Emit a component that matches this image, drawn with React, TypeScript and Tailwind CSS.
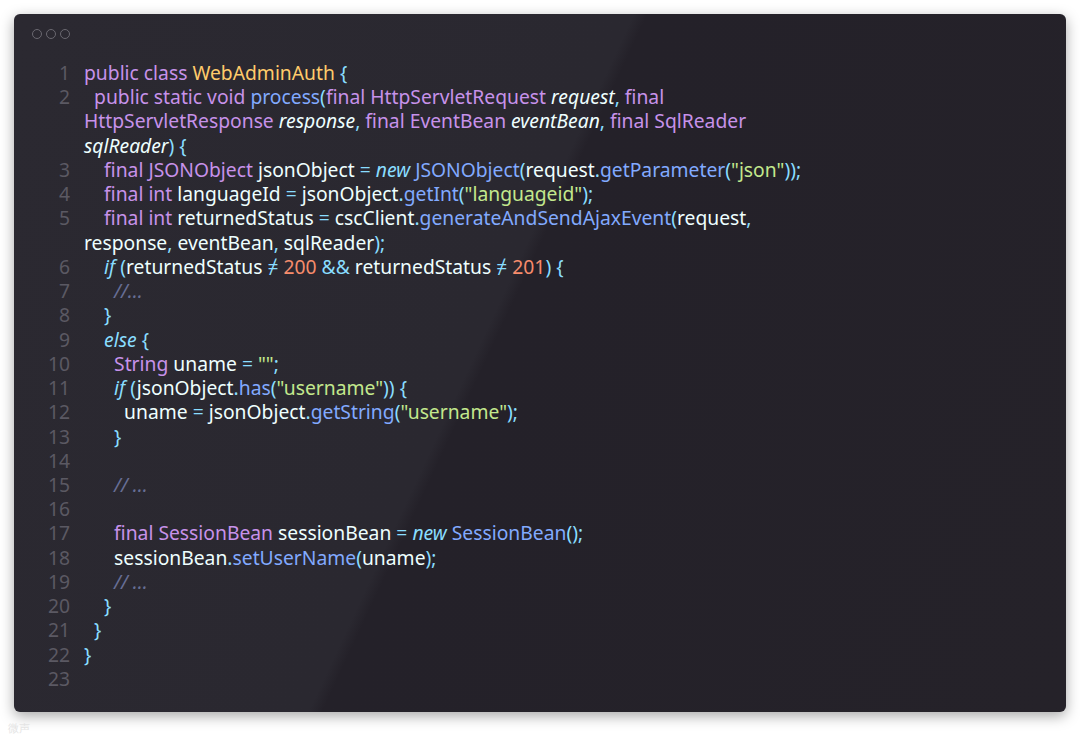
type Part = [string, string]

const C: Record<string, string> = {
  k: "text-[#c792ea]",
  y: "text-[#ffcb6b]",
  f: "text-[#82aaff]",
  s: "text-[#c3e88d]",
  p: "text-[#89ddff]",
  w: "text-[#eeffff]",
  i: "text-[#eeffff] italic",
  c: "text-[#676e95] italic",
  n: "text-[#f78c6c]",
  q: "text-[#89ddff] italic",
}

const rows: { n?: number; parts: Part[] }[] = [
  { n: 1, parts: [["k", "public class "], ["y", "WebAdminAuth "], ["p", "{"]] },
  { n: 2, parts: [["k", "  public static void "], ["f", "process"], ["p", "("], ["k", "final HttpServletRequest "], ["i", "request"], ["p", ", "], ["k", "final"]] },
  { parts: [["k", "HttpServletResponse "], ["i", "response"], ["p", ", "], ["k", "final EventBean "], ["i", "eventBean"], ["p", ", "], ["k", "final SqlReader"]] },
  { parts: [["i", "sqlReader"], ["p", ") {"]] },
  { n: 3, parts: [["k", "    final JSONObject "], ["w", "jsonObject "], ["p", "= "], ["q", "new "], ["f", "JSONObject"], ["p", "("], ["w", "request"], ["p", "."], ["f", "getParameter"], ["p", "("], ["s", "\"json\""], ["p", "));"]] },
  { n: 4, parts: [["k", "    final int "], ["w", "languageId "], ["p", "= "], ["w", "jsonObject"], ["p", "."], ["f", "getInt"], ["p", "("], ["s", "\"languageid\""], ["p", ");"]] },
  { n: 5, parts: [["k", "    final int "], ["w", "returnedStatus "], ["p", "= "], ["w", "cscClient"], ["p", "."], ["f", "generateAndSendAjaxEvent"], ["p", "("], ["w", "request"], ["p", ","]] },
  { parts: [["w", "response"], ["p", ", "], ["w", "eventBean"], ["p", ", "], ["w", "sqlReader"], ["p", ");"]] },
  { n: 6, parts: [["q", "    if "], ["p", "("], ["w", "returnedStatus "], ["p", "≠ "], ["n", "200 "], ["p", "&& "], ["w", "returnedStatus "], ["p", "≠ "], ["n", "201"], ["p", ") {"]] },
  { n: 7, parts: [["c", "      //..."]] },
  { n: 8, parts: [["p", "    }"]] },
  { n: 9, parts: [["q", "    else "], ["p", "{"]] },
  { n: 10, parts: [["k", "      String "], ["w", "uname "], ["p", "= "], ["s", "\"\""], ["p", ";"]] },
  { n: 11, parts: [["q", "      if "], ["p", "("], ["w", "jsonObject"], ["p", "."], ["f", "has"], ["p", "("], ["s", "\"username\""], ["p", ")) {"]] },
  { n: 12, parts: [["w", "        uname "], ["p", "= "], ["w", "jsonObject"], ["p", "."], ["f", "getString"], ["p", "("], ["s", "\"username\""], ["p", ");"]] },
  { n: 13, parts: [["p", "      }"]] },
  { n: 14, parts: [] },
  { n: 15, parts: [["c", "      // ..."]] },
  { n: 16, parts: [] },
  { n: 17, parts: [["k", "      final SessionBean "], ["w", "sessionBean "], ["p", "= "], ["q", "new "], ["f", "SessionBean"], ["p", "();"]] },
  { n: 18, parts: [["w", "      sessionBean"], ["p", "."], ["f", "setUserName"], ["p", "("], ["w", "uname"], ["p", ");"]] },
  { n: 19, parts: [["c", "      // ..."]] },
  { n: 20, parts: [["p", "    }"]] },
  { n: 21, parts: [["p", "  }"]] },
  { n: 22, parts: [["p", "}"]] },
  { n: 23, parts: [] },
]

export default function App() {
  return (
    <main className="w-[1080px] h-[745px] bg-white pt-[14px] pl-[14px] relative">
      <div className="w-[1052px] h-[698px] rounded-[6px] bg-[#26232c] bg-[linear-gradient(115deg,#2b2931_0%,#2a2830_45%,#242129_46%,#252229_100%)] shadow-[0_4px_14px_rgba(0,0,0,0.35)] overflow-hidden">
        <div className="flex gap-[4px] pt-[15px] pl-[18px]">
          <span className="w-[10px] h-[10px] rounded-full border border-[#6a6870]" />
          <span className="w-[10px] h-[10px] rounded-full border border-[#6a6870]" />
          <span className="w-[10px] h-[10px] rounded-full border border-[#6a6870]" />
        </div>
        <div className="mt-[22px] font-['Liberation_Mono'] text-[19.3px] leading-[24.24px]">
          {rows.map((r, idx) => (
            <div key={idx} className="flex whitespace-pre">
              <span className="w-[56px] text-right text-[#5b5963] shrink-0">{r.n ?? ""}</span>
              <span className="pl-[14px]">
                {r.parts.map(([c, t], j) => (
                  <span key={j} className={C[c]}>{t}</span>
                ))}
              </span>
            </div>
          ))}
        </div>
      </div>
      <span className="absolute left-[8px] top-[720px] text-[11px] text-[#e4e4e4] font-['Noto_Sans_CJK_SC']">微声</span>
    </main>
  )
}
